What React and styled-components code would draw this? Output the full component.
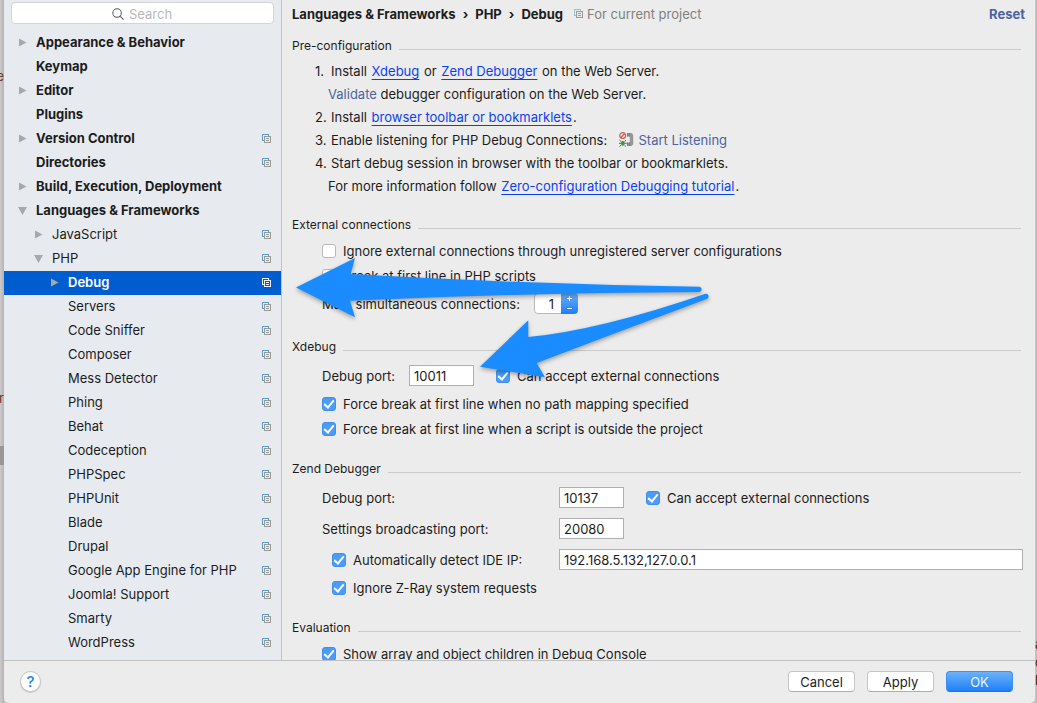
import React from "react";
import styled, { createGlobalStyle, css } from "styled-components";

const GlobalStyle = createGlobalStyle`
  * { box-sizing: border-box; }
  body {
    margin: 0;
    background: #c6c6c6;
    color: #1c1c1c;
    font: 13px/18px Inter, "Liberation Sans", sans-serif;
    overflow: hidden;
  }
  button, input { font: inherit; color: inherit; }
`;

const Desktop = styled.div`
  display: flex;
  height: 100vh;
  overflow: hidden;
`;

const Edge = styled.div`
  flex: 0 0 ${(p) => p.$width}px;
  display: flex;
  flex-direction: column;
  align-items: ${(p) => p.$align};
  overflow: hidden;
  background: linear-gradient(to right, #cccaca, #b4b2b2);
  color: ${(p) => p.$color};
  padding-top: ${(p) => p.$top}px;
`;

const Thumb = styled.div`
  width: 4px;
  height: 19px;
  margin-top: 39px;
  background: #989696;
`;

const EdgeGlyph = styled.span`
  margin-bottom: ${(p) => p.$after || 0}px;
`;

const Window = styled.div`
  position: relative;
  flex: 1;
  min-width: 0;
  display: flex;
  flex-direction: column;
  background: #ececec;
  border-radius: 0 0 5px 5px;
`;

const Body = styled.div`
  flex: 1;
  min-height: 0;
  display: flex;
`;

const Sidebar = styled.nav`
  flex: 0 0 278px;
  background: #e7ebf0;
  border-right: 1px solid #c3c3c7;
  overflow: hidden;
`;

const SearchBox = styled.label`
  display: flex;
  align-items: center;
  justify-content: center;
  gap: 5px;
  height: 22px;
  margin: 2px 7px 7px;
  padding: 2px 0 0 2px;
  background: #fff;
  border: 1px solid #d2d4d8;
  border-radius: 4px;
  color: #555;
`;

const SearchInput = styled.input`
  width: 46px;
  padding: 0;
  border: 0;
  outline: 0;
  background: none;
  &::placeholder { color: #b9b9b9; opacity: 1; }
`;

const Tree = styled.ul`
  list-style: none;
  margin: 0;
  padding: 0;
`;

const TreeRow = styled.button`
  display: flex;
  align-items: center;
  gap: 9px;
  width: 100%;
  height: 24px;
  border: 0;
  padding: 0 10px 2px ${(p) => 14 + p.$level * 16}px;
  text-align: left;
  font-weight: ${(p) => (p.$bold ? (p.$selected ? 600 : 700) : 400)};
  background: ${(p) => (p.$selected ? "#005dcf" : "none")};
  color: ${(p) => (p.$selected ? "#fff" : "#1c1c1c")};
`;

const TreeLabel = styled.span`
  flex: 1;
  white-space: nowrap;
`;

const Main = styled.main`
  flex: 1;
  min-width: 0;
  overflow: hidden;
  padding: 0 12px 0 10px;
`;

const Header = styled.header`
  display: flex;
  align-items: center;
  height: 27px;
  margin-right: -2px;
`;

const Crumbs = styled.h1`
  display: flex;
  gap: 7px;
  margin: 0 11px 0 0;
  font-size: 13px;
  font-weight: 700;
  white-space: nowrap;
`;

const Scope = styled.span`
  display: flex;
  align-items: center;
  gap: 4px;
  flex: 1;
  color: #808080;
`;

const Reset = styled.a`
  color: #4c63a0;
  font-weight: 700;
  text-decoration: none;
`;

const Section = styled.section`
  margin: 0 0 19px;
  &:first-of-type { margin-top: 10px; }
`;

const SectionTitle = styled.h2`
  display: flex;
  align-items: center;
  gap: 7px;
  margin: 0 2px 4px 0;
  font-size: 12px;
  line-height: 18px;
  font-weight: 400;
  white-space: nowrap;
  &::after {
    content: "";
    flex: 1;
    height: 1px;
    margin-top: 6px;
    background: #cacaca;
  }
`;

const Steps = styled.ol`
  list-style: none;
  margin: 0;
  padding: 0 0 0 23px;
`;

const StepLine = styled.div`
  display: flex;
  align-items: center;
  height: 23px;
  padding-left: ${(p) => (p.$sub ? 13 : 0)}px;
  white-space: pre;
`;

const StepNumber = styled.span`
  min-width: 16px;
`;

const Link = styled.a`
  margin: 0 1px;
  color: #0b3ff2;
  text-decoration: underline;
  text-underline-offset: 3px;
  text-decoration-skip-ink: none;
`;

const Action = styled.a`
  display: inline-flex;
  align-items: center;
  gap: 5px;
  margin-left: ${(p) => (p.$spaced ? 4 : 0)}px;
  color: #4c63a0;
  text-decoration: none;
`;

const Fields = styled.div`
  padding-left: 30px;
`;

const FieldRow = styled.div`
  display: flex;
  align-items: center;
  height: 31px;
`;

const FieldLabel = styled.label`
  width: ${(p) => p.$width}px;
  white-space: nowrap;
`;

const Grid = styled.div`
  display: grid;
  grid-template-columns: 237px 1fr;
  grid-auto-rows: 31px;
  align-items: center;
`;

const Cell = styled.div`
  display: flex;
  align-items: center;
`;

const TextInput = styled.input`
  width: ${(p) => (p.$wide ? "100%" : "65px")};
  height: 21px;
  padding: 0 4px;
  background: #fff;
  border: 1px solid #b0b0b0;
  border-radius: 0;
  outline: 0;
`;

const CheckLabel = styled.label`
  display: flex;
  align-items: center;
  gap: 7px;
  height: 25px;
  padding-left: ${(p) => p.$indent || 0}px;
  white-space: nowrap;
`;

const tick = css`
  background: #4a9cf8;
  border-color: #3f90ee;
  &::after {
    content: "";
    width: 4px;
    height: 8px;
    margin-bottom: 2px;
    border: solid #fff;
    border-width: 0 2px 2px 0;
    transform: rotate(40deg);
  }
`;

const Checkbox = styled.input`
  appearance: none;
  display: flex;
  align-items: center;
  justify-content: center;
  flex: none;
  width: 14px;
  height: 14px;
  margin: 0;
  background: #fff;
  border: 1px solid #b8b8b8;
  border-radius: 3px;
  &:checked { ${tick} }
`;

const Spinner = styled.div`
  display: flex;
  width: 44px;
  height: 21px;
  border-radius: 4px;
  overflow: hidden;
`;

const SpinnerInput = styled.input`
  flex: 1;
  min-width: 0;
  padding: 0 7px;
  text-align: right;
  background: #fff;
  border: 1px solid #b8b8b8;
  border-right: 0;
  border-radius: 4px 0 0 4px;
  outline: 0;
`;

const Stepper = styled.div`
  display: flex;
  flex-direction: column;
  width: 17px;
  background: linear-gradient(#6cb0fb, #1f7df5);
`;

const StepButton = styled.button`
  flex: 1;
  display: flex;
  align-items: center;
  justify-content: center;
  padding: 0;
  border: 0;
  background: none;
`;

const Footer = styled.footer`
  display: flex;
  align-items: center;
  gap: 12px;
  height: 43px;
  padding: 0 22px 1px 16px;
  border-top: 1px solid #c0c0c3;
`;

const HelpButton = styled.button`
  width: 21px;
  height: 21px;
  margin-right: auto;
  padding: 0;
  border: 1px solid #c4c4c4;
  border-radius: 50%;
  background: #fff;
  color: #1e82f5;
  font-size: 15px;
  line-height: 18px;
  font-weight: 500;
  box-shadow: 0 1px 1px #00000022;
`;

const DialogButton = styled.button`
  width: 67px;
  height: 21px;
  padding: 0;
  border: 1px solid ${(p) => (p.$primary ? "#3d8ff0" : "#c6c6c6")};
  border-bottom-color: ${(p) => (p.$primary ? "#1b74e8" : "#adadad")};
  border-radius: 4px;
  line-height: 18px;
  background: ${(p) => (p.$primary ? "linear-gradient(#6cb1fa, #1f80f8)" : "#fff")};
  color: ${(p) => (p.$primary ? "#e9f3ff" : "#1c1c1c")};
`;

const Arrows = styled.svg`
  position: absolute;
  left: 286px;
  top: 250px;
  pointer-events: none;
  filter: drop-shadow(0 2px 2px #00000055);
`;

function ProjectIcon({ selected, faded }) {
  const back = selected ? "#e8f0fa" : faded ? "#9dbdd3" : "#5f9cc4";
  const front = selected ? "#e8f0fa" : "#9a9a9a";
  return (
    <svg width="9" height="9" viewBox="0 0 9 9" fill="none" shapeRendering="crispEdges" aria-hidden="true">
      <path d="M2 6.5H.5V.5h6V2" stroke={back} />
      <rect x="2.5" y="2.5" width="6" height="6" stroke={front} />
      <path d="M4 4.5h3M4 6.5h3" stroke={front} />
    </svg>
  );
}

function Twisty({ state }) {
  return (
    <svg width="9" height="9" viewBox="0 0 9 9" fill="#a7a8aa" aria-hidden="true">
      {state === "closed" && <path d="M1 0.500l7.500 4L1 8.500z" />}
      {state === "open" && <path d="M0 1h9L4.500 9z" />}
    </svg>
  );
}

function SearchIcon() {
  return (
    <svg width="12" height="12" viewBox="0 0 13 13" fill="none" stroke="#555" strokeWidth="1.100" aria-hidden="true">
      <circle cx="5.500" cy="5.500" r="4.600" />
      <path d="M9 9l3.500 3.500" />
    </svg>
  );
}

function ListenIcon() {
  return (
    <svg width="15" height="15" viewBox="0 0 15 15" fill="none" aria-hidden="true">
      <circle cx="3.700" cy="3.500" r="2.900" stroke="#cc5a50" strokeWidth="1.200" />
      <path d="M1.800 5.500l3.900-4" stroke="#cc5a50" strokeWidth="1.200" />
      <path d="M8 1h4.500l1.700 1.800v9.400L12.500 14H8v-3.500h2.800v-6H8z" fill="#969696" />
      <path d="M8.500 1v3.500M8.500 10.500V14M10.500 1v3.500M10.500 10.500V14" stroke="#7a7a7a" />
      <ellipse cx="3.800" cy="11.300" rx="1.900" ry="2.500" fill="#3c9a3c" />
      <path d="M.5 8.200l1.600 1.300M7 8.200L5.500 9.500M0 11.300h2M5.600 11.300h2M.5 14.500l1.600-1.300M7 14.500l-1.500-1.300" stroke="#4a6b4a" />
    </svg>
  );
}

const tree = [
  { label: "Appearance & Behavior", state: "closed" },
  { label: "Keymap" },
  { label: "Editor", state: "closed" },
  { label: "Plugins" },
  { label: "Version Control", state: "closed", project: true },
  { label: "Directories", project: true },
  { label: "Build, Execution, Deployment", state: "closed" },
  { label: "Languages & Frameworks", state: "open" },
  { label: "JavaScript", level: 1, state: "closed", project: true },
  { label: "PHP", level: 1, state: "open", project: true },
  { label: "Debug", level: 2, state: "closed", project: true, selected: true },
  ...[
    "Servers", "Code Sniffer", "Composer", "Mess Detector", "Phing", "Behat",
    "Codeception", "PHPSpec", "PHPUnit", "Blade", "Drupal",
    "Google App Engine for PHP", "Joomla! Support", "Smarty", "WordPress",
  ].map((label) => ({ label, level: 2, project: true })),
];

function Check({ children, checked, indent }) {
  return (
    <CheckLabel $indent={indent}>
      <Checkbox type="checkbox" defaultChecked={checked} />
      {children}
    </CheckLabel>
  );
}

export default function App() {
  return (
    <Desktop>
      <GlobalStyle />
      <Edge $width={4} $top={67} $align="flex-end" $color="#6b3a2c" aria-hidden="true">
        <EdgeGlyph $after={304}>e</EdgeGlyph>
        <EdgeGlyph>r</EdgeGlyph>
        <Thumb />
      </Edge>
      <Window>
        <Body>
          <Sidebar>
            <SearchBox>
              <SearchIcon />
              <SearchInput type="text" placeholder="Search" aria-label="Search" />
            </SearchBox>
            <Tree>
              {tree.map(({ label, level = 0, state, project, selected }) => (
                <li key={label}>
                  <TreeRow type="button" $level={level} $bold={level === 0 || selected} $selected={selected}>
                    <Twisty state={state} />
                    <TreeLabel>{label}</TreeLabel>
                    {project && <ProjectIcon selected={selected} />}
                  </TreeRow>
                </li>
              ))}
            </Tree>
          </Sidebar>
          <Main>
            <Header>
              <Crumbs>
                <span>Languages &amp; Frameworks</span>
                <span>›</span>
                <span>PHP</span>
                <span>›</span>
                <span>Debug</span>
              </Crumbs>
              <Scope><ProjectIcon faded />For current project</Scope>
              <Reset href="#reset">Reset</Reset>
            </Header>

            <Section>
              <SectionTitle>Pre-configuration</SectionTitle>
              <Steps>
                <li>
                  <StepLine><StepNumber>1.</StepNumber>Install <Link href="#xdebug">Xdebug</Link> or <Link href="#zend">Zend Debugger</Link> on the Web Server.</StepLine>
                  <StepLine $sub><Action href="#validate">Validate</Action> debugger configuration on the Web Server.</StepLine>
                </li>
                <li>
                  <StepLine><StepNumber>2.</StepNumber>Install <Link href="#toolbar">browser toolbar or bookmarklets</Link>.</StepLine>
                </li>
                <li>
                  <StepLine><StepNumber>3.</StepNumber>Enable listening for PHP Debug Connections:  <Action href="#listen" $spaced><ListenIcon />Start Listening</Action></StepLine>
                </li>
                <li>
                  <StepLine><StepNumber>4.</StepNumber>Start debug session in browser with the toolbar or bookmarklets.</StepLine>
                  <StepLine $sub>For more information follow <Link href="#tutorial">Zero-configuration Debugging tutorial</Link>.</StepLine>
                </li>
              </Steps>
            </Section>

            <Section>
              <SectionTitle>External connections</SectionTitle>
              <Fields>
                <Check>Ignore external connections through unregistered server configurations</Check>
                <Check>Break at first line in PHP scripts</Check>
                <FieldRow>
                  <FieldLabel htmlFor="max" $width={212}>Max. simultaneous connections:</FieldLabel>
                  <Spinner>
                    <SpinnerInput id="max" type="text" defaultValue="1" />
                    <Stepper>
                      <StepButton type="button" aria-label="Increase">
                        <svg width="7" height="7" viewBox="0 0 7 7" stroke="#fff"><path d="M1 3.500h5M3.500 1v5" /></svg>
                      </StepButton>
                      <StepButton type="button" aria-label="Decrease">
                        <svg width="7" height="7" viewBox="0 0 7 7" stroke="#fff"><path d="M1 3.500h5" /></svg>
                      </StepButton>
                    </Stepper>
                  </Spinner>
                </FieldRow>
              </Fields>
            </Section>

            <Section>
              <SectionTitle>Xdebug</SectionTitle>
              <Fields>
                <FieldRow>
                  <FieldLabel htmlFor="xport" $width={87}>Debug port:</FieldLabel>
                  <TextInput id="xport" type="text" defaultValue="10011" />
                  <Check checked indent={22}>Can accept external connections</Check>
                </FieldRow>
                <Check checked>Force break at first line when no path mapping specified</Check>
                <Check checked>Force break at first line when a script is outside the project</Check>
              </Fields>
            </Section>

            <Section>
              <SectionTitle>Zend Debugger</SectionTitle>
              <Fields>
                <Grid>
                  <label htmlFor="zport">Debug port:</label>
                  <Cell>
                    <TextInput id="zport" type="text" defaultValue="10137" />
                    <Check checked indent={22}>Can accept external connections</Check>
                  </Cell>
                  <label htmlFor="bport">Settings broadcasting port:</label>
                  <Cell><TextInput id="bport" type="text" defaultValue="20080" /></Cell>
                  <Check checked indent={10}>Automatically detect IDE IP:</Check>
                  <Cell><TextInput $wide type="text" aria-label="IDE IP" defaultValue="192.168.5.132,127.0.0.1" /></Cell>
                </Grid>
                <Check checked indent={10}>Ignore Z-Ray system requests</Check>
              </Fields>
            </Section>

            <Section>
              <SectionTitle>Evaluation</SectionTitle>
              <Fields>
                <Check checked>Show array and object children in Debug Console</Check>
              </Fields>
            </Section>
          </Main>
        </Body>
        <Footer>
          <HelpButton type="button" aria-label="Help">?</HelpButton>
          <DialogButton type="button">Cancel</DialogButton>
          <DialogButton type="button">Apply</DialogButton>
          <DialogButton type="button" $primary>OK</DialogButton>
        </Footer>
        <Arrows width="430" height="135" viewBox="290 250 430 135" fill="#1a8cff" aria-hidden="true">
          <path d="M296 287.500L355 258L350.700 274Q525 284 699.500 286.700A2.700 2.700 0 0 1 699.500 292Q525 293 350 300.700L355 317.300Z" />
          <path d="M480 366.700L528.300 320.300V337Q600 330 705.500 293.700A2.700 2.700 0 0 1 706.500 299Q610 335 536.700 363L545 377.300Z" />
        </Arrows>
      </Window>
      <Edge $width={2} $top={635} $align="flex-start" $color="#3a2a1c" aria-hidden="true">
        <EdgeGlyph>a</EdgeGlyph>
        <EdgeGlyph>d</EdgeGlyph>
        <EdgeGlyph>b</EdgeGlyph>
      </Edge>
    </Desktop>
  );
}
